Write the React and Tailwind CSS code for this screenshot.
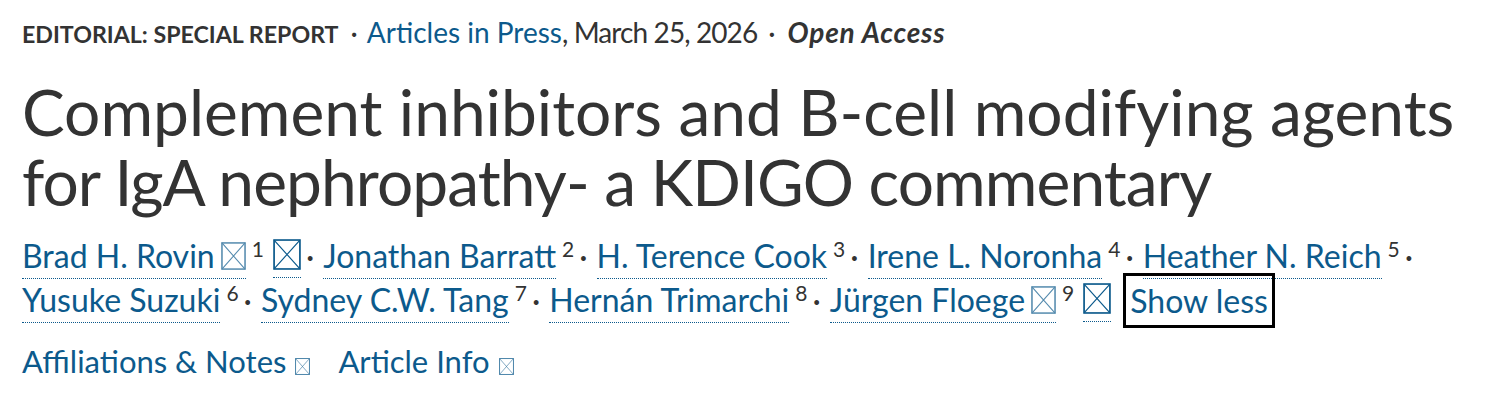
import React from "react"

const blue = "text-[#0c5a8c]"

function Tofu({ className = "" }) {
  // missing-glyph box, as the icon font shows in the page
  return (
    <svg viewBox="0 0 26 30" preserveAspectRatio="none" className={className} fill="none" stroke="currentColor" strokeWidth="1.6">
      <rect x="1" y="1" width="24" height="28" />
      <path d="M1 1 L25 29 M25 1 L1 29" strokeWidth="1.1" />
    </svg>
  )
}

function Author({ name, sup, mail, last }) {
  return (
    <span className="inline-flex items-start">
      <a className={`${blue} border-b border-dotted border-[#0c5a8c] pb-[3px] leading-[38px] inline-flex items-center`}>
        {name}
        {mail && <Tofu className="w-[25px] h-[28px] ml-[6px] opacity-70" />}
      </a>
      <span className="text-[21px] text-[#333] ml-[6px] mt-[1px] leading-[21px]">{sup}</span>
      {mail && (
        <a className={`${blue} border-b border-dotted border-[#0c5a8c] ml-[9px] pb-[7px] inline-flex items-end h-[41px]`}>
          <Tofu className="w-[28px] h-[31px]" />
        </a>
      )}
      {!last && <span className="text-[#333] ml-[5px] mr-[9px] leading-[38px]">·</span>}
    </span>
  )
}

export default function App() {
  return (
    <div className="pl-[22px] pt-[15px] font-['Lato',sans-serif] bg-white min-h-[401px]">
      <div className="text-[28px] leading-[34px] text-[#333] flex items-baseline">
        <span className="font-bold text-[23.2px] uppercase">Editorial: Special Report</span>
        <span className="ml-[12px] mr-[9px]">·</span>
        <a className={blue}>Articles in Press</a>
        <span className="tracking-[-0.9px]">, March 25, 2026</span>
        <span className="ml-[11px] mr-[12px]">·</span>
        <span className="font-bold italic tracking-[0.8px]">Open Access</span>
      </div>

      <h1 className="text-[64px] leading-[70px] text-[#333] mt-[26px] font-normal">
        Complement inhibitors and B-cell modifying agents
        <br />
        <span className="tracking-[-0.9px]">for IgA nephropathy- a KDIGO commentary</span>
      </h1>

      <div className="text-[32px] mt-[20px]">
        <div className="flex items-start h-[44px]">
          <Author name="Brad H. Rovin" sup="1" mail />
          <Author name="Jonathan Barratt" sup="2" />
          <Author name="H. Terence Cook" sup="3" />
          <Author name="Irene L. Noronha" sup="4" />
          <Author name="Heather N. Reich" sup="5" />
        </div>
        <div className="flex items-start h-[44px]">
          <Author name="Yusuke Suzuki" sup="6" />
          <Author name="Sydney C.W. Tang" sup="7" />
          <Author name="Hernán Trimarchi" sup="8" />
          <Author name="Jürgen Floege" sup="9" mail last />
          <button className={`${blue} ml-[12px] -mt-[8px] border-[3px] border-black px-[4px] h-[55px] leading-[38px]`}>
            Show less
          </button>
        </div>
      </div>

      <div className={`${blue} text-[31px] leading-[38px] flex items-baseline mt-[17px]`}>
        <a className="flex items-baseline">
          Affiliations &amp; Notes
          <Tofu className="w-[15px] h-[17px] ml-[9px] relative top-[2px] opacity-80" />
        </a>
        <a className="flex items-baseline ml-[28px]">
          Article Info
          <Tofu className="w-[15px] h-[17px] ml-[9px] relative top-[2px] opacity-80" />
        </a>
      </div>
    </div>
  )
}
